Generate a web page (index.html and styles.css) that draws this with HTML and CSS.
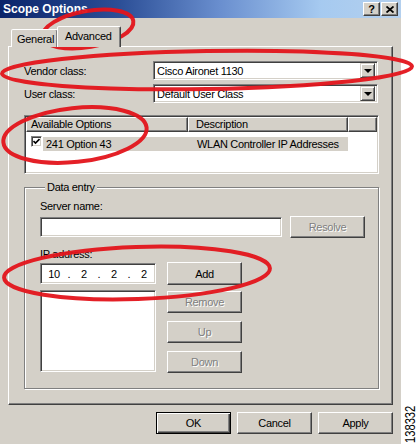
FILE: index.html
```html
<!DOCTYPE html>
<html>
<head>
<meta charset="utf-8">
<title>Scope Options</title>
<link rel="stylesheet" href="styles.css">
</head>
<body>
<div class="page">
  <div class="dialog">
    <div class="titlebar">
      <span class="title">Scope Options</span>
      <div class="tbtns">
        <span class="tbtn">?</span>
        <span class="tbtn"><svg width="8" height="7" viewBox="0 0 8 7"><path d="M0.5 0.5 L7.5 6.5 M7.5 0.5 L0.5 6.5" stroke="#000" stroke-width="1.8" fill="none"/></svg></span>
      </div>
    </div>

    <div class="tabs">
      <div class="tab">General</div>
      <div class="tab active">Advanced</div>
    </div>

    <div class="panel">
      <div class="row">
        <span class="lbl">Vendor class:</span>
        <div class="combo"><span class="combo-text">Cisco Aironet 1130</span><span class="dd"><i class="tri"></i></span></div>
      </div>
      <div class="row row2">
        <span class="lbl">User class:</span>
        <div class="combo"><span class="combo-text">Default User Class</span><span class="dd"><i class="tri"></i></span></div>
      </div>

      <div class="listview">
        <div class="lv-head">
          <div class="hcell c1">Available Options</div>
          <div class="hcell c2">Description</div>
          <div class="hcell c3"></div>
        </div>
        <div class="lv-row">
          <span class="chk"><svg width="7" height="7" viewBox="0 0 7 7"><path d="M0.5 3 L2.5 5 L6.5 1" stroke="#000" stroke-width="1.6" fill="none"/></svg></span>
          <div class="sel">
            <span class="sc1">241 Option 43</span>
            <span class="sc2">WLAN Controller IP Addresses</span>
          </div>
        </div>
      </div>

      <fieldset class="group">
        <legend>Data entry</legend>
        <div class="glbl">Server name:</div>
        <div class="server-row">
          <div class="field server"></div>
          <button class="btn disabled">Resolve</button>
        </div>
        <div class="glbl ip-lbl">IP address:</div>
        <div class="ip-grid">
          <div class="ip-left">
            <div class="field ip">
              <span class="oct">10</span><span class="dot">.</span><span class="oct">2</span><span class="dot">.</span><span class="oct">2</span><span class="dot">.</span><span class="oct">2</span>
            </div>
            <div class="field listbox"></div>
          </div>
          <div class="ip-right">
            <button class="btn">Add</button>
            <button class="btn disabled remove">Remove</button>
            <button class="btn disabled spaced">Up</button>
            <button class="btn disabled spaced">Down</button>
          </div>
        </div>
      </fieldset>
    </div>

    <div class="footer">
      <button class="btn default">OK</button>
      <button class="btn">Cancel</button>
      <button class="btn">Apply</button>
    </div>
  </div>

  <div class="side">
    <span class="figno">138332</span>
  </div>

  <svg class="marks" width="418" height="444" viewBox="0 0 418 444">
    <g fill="none" stroke="#e3141b" stroke-width="4" stroke-opacity="0.95">
      <ellipse cx="88" cy="29" rx="46" ry="18" transform="rotate(-10 88 29)"/>
      <ellipse cx="207" cy="70" rx="205" ry="19" transform="rotate(-1 207 70)"/>
      <ellipse cx="75" cy="135" rx="72" ry="27" transform="rotate(-6 75 135)"/>
      <ellipse cx="137" cy="273" rx="133" ry="26" transform="rotate(-2 137 273)"/>
    </g>
  </svg>
</div>
</body>
</html>
```

FILE: styles.css
```css
* { box-sizing: border-box; }

html, body {
  margin: 0;
  padding: 0;
  background: #fff;
}

body {
  font-family: "Liberation Sans", Arial, sans-serif;
  font-size: 11px;
  letter-spacing: -0.3px;
  color: #000;
}

.page {
  position: relative;
  width: 418px;
  height: 444px;
  display: flex;
  overflow: hidden;
}

.dialog {
  width: 401px;
  height: 444px;
  background: #d4d0c8;
  display: flex;
  flex-direction: column;
}

/* title bar */
.titlebar {
  height: 18px;
  flex: 0 0 18px;
  background: linear-gradient(90deg, #0a246a 0%, #2c4f97 30%, #6a8fcf 55%, #a6caf0 80%, #b4d0ee 100%);
  display: flex;
  align-items: center;
  justify-content: space-between;
  padding: 0 3px 0 3px;
}

.title {
  color: #fff;
  font-weight: bold;
  font-size: 12px;
  letter-spacing: 0;
}

.tbtns {
  display: flex;
  gap: 1px;
}

.tbtn {
  width: 17px;
  height: 14px;
  background: #d4d0c8;
  border: 1px solid;
  border-color: #fff #404040 #404040 #fff;
  box-shadow: inset -1px -1px 0 #808080;
  display: flex;
  align-items: center;
  justify-content: center;
  font-weight: bold;
  font-size: 11px;
  line-height: 12px;
  letter-spacing: 0;
}

/* tabs */
.tabs {
  position: relative;
  z-index: 1;
  display: flex;
  align-items: flex-end;
  height: 21px;
  margin: 8px 0 -1px 11px;
}

.tab {
  width: 47px;
  height: 18px;
  padding: 3px 0 0 5px;
  border: 1px solid;
  border-bottom: none;
  border-color: #fff #404040 transparent #fff;
  box-shadow: inset -1px 0 0 #808080;
  border-radius: 2px 2px 0 0;
  line-height: 12px;
  background: #d4d0c8;
}

.tab.active {
  width: 64px;
  height: 21px;
  margin-left: -1px;
  padding: 3px 0 0 7px;
}

/* panel */
.panel {
  margin: 0 8px;
  height: 359px;
  flex: 0 0 359px;
  border: 1px solid;
  border-color: #fff #404040 #404040 #fff;
  box-shadow: inset -1px -1px 0 #808080;
  padding: 14px 14px 0 15px;
  display: flex;
  flex-direction: column;
}

.row {
  display: flex;
  align-items: center;
  height: 19px;
}

.row2 {
  margin-top: 4px;
}

.lbl {
  flex: 0 0 129px;
}

.combo {
  width: 225px;
  height: 19px;
  display: flex;
  align-items: center;
  background: #fff;
  border: 1px solid;
  border-color: #808080 #fff #fff #808080;
  box-shadow: inset 1px 1px 0 #404040, inset -1px -1px 0 #d4d0c8;
  padding: 2px 2px 2px 0;
}

.combo-text {
  flex: 1;
  padding-left: 3px;
  white-space: nowrap;
  overflow: hidden;
}

.dd {
  width: 15px;
  height: 15px;
  background: #d4d0c8;
  border: 1px solid;
  border-color: #d4d0c8 #404040 #404040 #d4d0c8;
  box-shadow: inset 1px 1px 0 #fff, inset -1px -1px 0 #808080;
  display: flex;
  align-items: center;
  justify-content: center;
}

.tri {
  display: block;
  width: 0;
  height: 0;
  border-left: 4px solid transparent;
  border-right: 4px solid transparent;
  border-top: 4px solid #000;
  margin-top: 1px;
}

/* list view */
.listview {
  margin-top: 12px;
  margin-right: -1px;
  height: 59px;
  flex: 0 0 59px;
  background: #fff;
  border: 1px solid;
  border-color: #808080 #fff #fff #808080;
  box-shadow: inset 1px 1px 0 #404040, inset -1px -1px 0 #d4d0c8;
  padding: 1px;
}

.lv-head {
  display: flex;
  height: 15px;
}

.hcell {
  height: 15px;
  background: #d4d0c8;
  border: 1px solid;
  border-color: #fff #404040 #404040 #fff;
  box-shadow: inset -1px -1px 0 #808080;
  line-height: 12px;
  white-space: nowrap;
}

.c1 { width: 162px; padding-left: 4px; }
.c2 { width: 160px; padding-left: 7px; }
.c3 { flex: 1; }

.lv-row {
  display: flex;
  align-items: flex-start;
  margin-top: 4px;
  height: 16px;
}

.chk {
  width: 11px;
  height: 11px;
  margin-left: 5px;
  background: #fff;
  border: 1px solid;
  border-color: #808080 #fff #fff #808080;
  box-shadow: inset 1px 1px 0 #404040, inset -1px -1px 0 #d4d0c8;
  display: flex;
  align-items: center;
  justify-content: center;
}

.sel {
  display: flex;
  width: 305px;
  height: 14px;
  margin-left: 1px;
  margin-top: 1px;
  background: #d4d0c8;
  line-height: 14px;
  white-space: nowrap;
}

.sc1 { width: 145px; padding-left: 3px; }
.sc2 { padding-left: 9px; }

/* group box */
.group {
  margin: 7px -1px 0 0;
  padding: 6px 13px 15px 15px;
  border: 1px solid #808080;
  box-shadow: inset 1px 1px 0 #fff, 1px 1px 0 #fff;
  min-width: 0;
}

.group legend {
  padding: 0 2px;
  margin-left: 5px;
  line-height: 13px;
  background: #d4d0c8;
}

.glbl {
  line-height: 13px;
}

.server-row {
  display: flex;
  align-items: center;
  gap: 8px;
  margin-top: 3px;
  height: 22px;
}

.field {
  background: #fff;
  border: 1px solid;
  border-color: #808080 #fff #fff #808080;
  box-shadow: inset 1px 1px 0 #404040, inset -1px -1px 0 #d4d0c8;
}

.server {
  width: 242px;
  height: 20px;
}

.ip-lbl {
  margin-top: 10px;
}

.ip-grid {
  display: flex;
  gap: 11px;
  margin-top: 1px;
}

.ip-left {
  display: flex;
  flex-direction: column;
  width: 116px;
}

.ip {
  margin-top: 1px;
  height: 21px;
  display: flex;
  align-items: center;
  padding-left: 5px;
}

.oct {
  width: 16px;
  text-align: center;
}

.dot {
  width: 14px;
  text-align: center;
}

.listbox {
  margin-top: 6px;
  height: 82px;
}

.ip-right {
  display: flex;
  flex-direction: column;
}

.ip-right .btn { height: 22px; }
.ip-right .btn:first-child { height: 23px; }
.ip-right .remove { margin-top: 6px; }
.ip-right .spaced { margin-top: 8px; }

/* buttons */
.btn {
  width: 75px;
  height: 22px;
  padding: 0;
  margin: 0;
  font: inherit;
  letter-spacing: inherit;
  color: #000;
  background: #d4d0c8;
  border: 1px solid;
  border-color: #fff #404040 #404040 #fff;
  box-shadow: inset -1px -1px 0 #808080;
  text-align: center;
}

.btn.disabled {
  color: #808080;
  text-shadow: 1px 1px 0 #fff;
}

.btn.default {
  border-color: #000;
  box-shadow: inset 1px 1px 0 #fff, inset -1px -1px 0 #404040, inset -2px -2px 0 #808080;
}

.server-row .btn {
  height: 22px;
}

/* footer */
.footer {
  display: flex;
  justify-content: flex-end;
  gap: 6px;
  margin-top: 7px;
  padding-right: 8px;
}

/* side strip with figure number */
.side {
  flex: 1;
  display: flex;
  flex-direction: column;
  justify-content: flex-end;
  align-items: center;
  padding-bottom: 0;
}

.figno {
  display: block;
  writing-mode: vertical-rl;
  transform: rotate(180deg) scaleY(0.8);
  transform-origin: center center;
  margin-bottom: -4px;
  font-size: 14px;
  letter-spacing: 0;
  line-height: 12px;
  color: #000;
}

/* annotation overlay */
.marks {
  position: absolute;
  left: 0;
  top: 0;
  pointer-events: none;
}
```
